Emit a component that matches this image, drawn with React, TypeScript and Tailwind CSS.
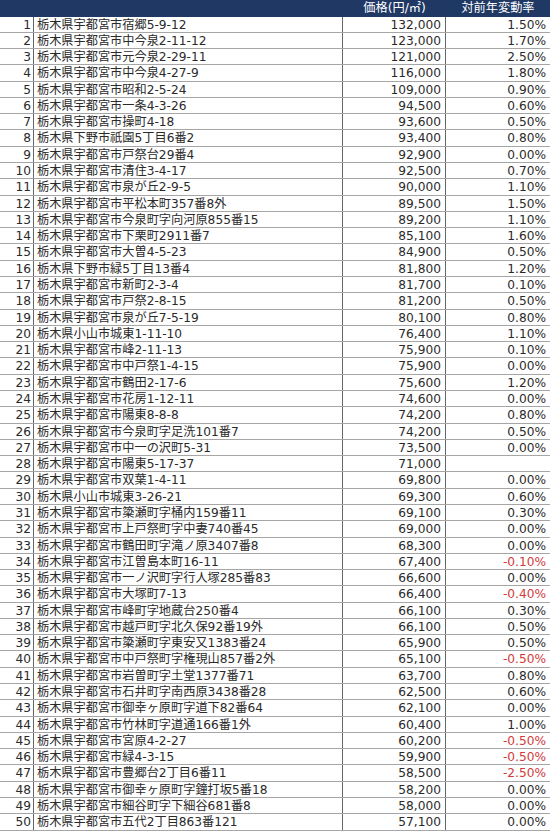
const rows: [string, string, string][] = [
  ["栃木県宇都宮市宿郷5-9-12", "132,000", "1.50%"],
  ["栃木県宇都宮市中今泉2-11-12", "123,000", "1.70%"],
  ["栃木県宇都宮市元今泉2-29-11", "121,000", "2.50%"],
  ["栃木県宇都宮市中今泉4-27-9", "116,000", "1.80%"],
  ["栃木県宇都宮市昭和2-5-24", "109,000", "0.90%"],
  ["栃木県宇都宮市一条4-3-26", "94,500", "0.60%"],
  ["栃木県宇都宮市操町4-18", "93,600", "0.50%"],
  ["栃木県下野市祇園5丁目6番2", "93,400", "0.80%"],
  ["栃木県宇都宮市戸祭台29番4", "92,900", "0.00%"],
  ["栃木県宇都宮市清住3-4-17", "92,500", "0.70%"],
  ["栃木県宇都宮市泉が丘2-9-5", "90,000", "1.10%"],
  ["栃木県宇都宮市平松本町357番8外", "89,500", "1.50%"],
  ["栃木県宇都宮市今泉町字向河原855番15", "89,200", "1.10%"],
  ["栃木県宇都宮市下栗町2911番7", "85,100", "1.60%"],
  ["栃木県宇都宮市大曽4-5-23", "84,900", "0.50%"],
  ["栃木県下野市緑5丁目13番4", "81,800", "1.20%"],
  ["栃木県宇都宮市新町2-3-4", "81,700", "0.10%"],
  ["栃木県宇都宮市戸祭2-8-15", "81,200", "0.50%"],
  ["栃木県宇都宮市泉が丘7-5-19", "80,100", "0.80%"],
  ["栃木県小山市城東1-11-10", "76,400", "1.10%"],
  ["栃木県宇都宮市峰2-11-13", "75,900", "0.10%"],
  ["栃木県宇都宮市中戸祭1-4-15", "75,900", "0.00%"],
  ["栃木県宇都宮市鶴田2-17-6", "75,600", "1.20%"],
  ["栃木県宇都宮市花房1-12-11", "74,600", "0.00%"],
  ["栃木県宇都宮市陽東8-8-8", "74,200", "0.80%"],
  ["栃木県宇都宮市今泉町字足洗101番7", "74,200", "0.50%"],
  ["栃木県宇都宮市中一の沢町5-31", "73,500", "0.00%"],
  ["栃木県宇都宮市陽東5-17-37", "71,000", ""],
  ["栃木県宇都宮市双葉1-4-11", "69,800", "0.00%"],
  ["栃木県小山市城東3-26-21", "69,300", "0.60%"],
  ["栃木県宇都宮市簗瀬町字桶内159番11", "69,100", "0.30%"],
  ["栃木県宇都宮市上戸祭町字中妻740番45", "69,000", "0.00%"],
  ["栃木県宇都宮市鶴田町字滝ノ原3407番8", "68,300", "0.00%"],
  ["栃木県宇都宮市江曽島本町16-11", "67,400", "-0.10%"],
  ["栃木県宇都宮市一ノ沢町字行人塚285番83", "66,600", "0.00%"],
  ["栃木県宇都宮市大塚町7-13", "66,400", "-0.40%"],
  ["栃木県宇都宮市峰町字地蔵台250番4", "66,100", "0.30%"],
  ["栃木県宇都宮市越戸町字北久保92番19外", "66,100", "0.50%"],
  ["栃木県宇都宮市簗瀬町字東安又1383番24", "65,900", "0.50%"],
  ["栃木県宇都宮市中戸祭町字権現山857番2外", "65,100", "-0.50%"],
  ["栃木県宇都宮市岩曽町字土堂1377番71", "63,700", "0.80%"],
  ["栃木県宇都宮市石井町字南西原3438番28", "62,500", "0.60%"],
  ["栃木県宇都宮市御幸ヶ原町字道下82番64", "62,100", "0.00%"],
  ["栃木県宇都宮市竹林町字道通166番1外", "60,400", "1.00%"],
  ["栃木県宇都宮市宮原4-2-27", "60,200", "-0.50%"],
  ["栃木県宇都宮市緑4-3-15", "59,900", "-0.50%"],
  ["栃木県宇都宮市豊郷台2丁目6番11", "58,500", "-2.50%"],
  ["栃木県宇都宮市御幸ヶ原町字鐘打坂5番18", "58,200", "0.00%"],
  ["栃木県宇都宮市細谷町字下細谷681番8", "58,000", "0.00%"],
  ["栃木県宇都宮市五代2丁目863番121", "57,100", "0.00%"],
];

export default function App() {
  return (
    <div
      className="w-[550px] h-[831px] bg-white text-[#2a2a2a] text-[12.2px] overflow-hidden"
      style={{ fontFamily: '"DejaVu Sans", "Noto Sans CJK JP", sans-serif' }}
    >
      <div className="flex h-[16.5px] bg-[#1f3864] text-white leading-[17px]">
        <div className="w-[34px]" />
        <div className="w-[309px]" />
        <div className="w-[103px] text-center">価格(円/㎡)</div>
        <div className="flex-1 text-center">対前年変動率</div>
      </div>
      {rows.map(([addr, price, rate], i) => (
        <div
          key={i}
          className="flex h-[16.29px] leading-[16px] border-b border-[#a6a6a6]"
        >
          <div className="w-[34px] pr-[2px] text-right border-r border-[#666]">
            {i + 1}
          </div>
          <div className="w-[309px] pl-[3px] whitespace-nowrap border-r border-[#666]">
            {addr}
          </div>
          <div className="w-[103px] pr-[4px] text-right border-r border-[#666]">
            {price}
          </div>
          <div
            className={
              "flex-1 pr-[4px] text-right" +
              (rate.startsWith("-") ? " text-[#d03a3a]" : "")
            }
          >
            {rate}
          </div>
        </div>
      ))}
    </div>
  );
}
